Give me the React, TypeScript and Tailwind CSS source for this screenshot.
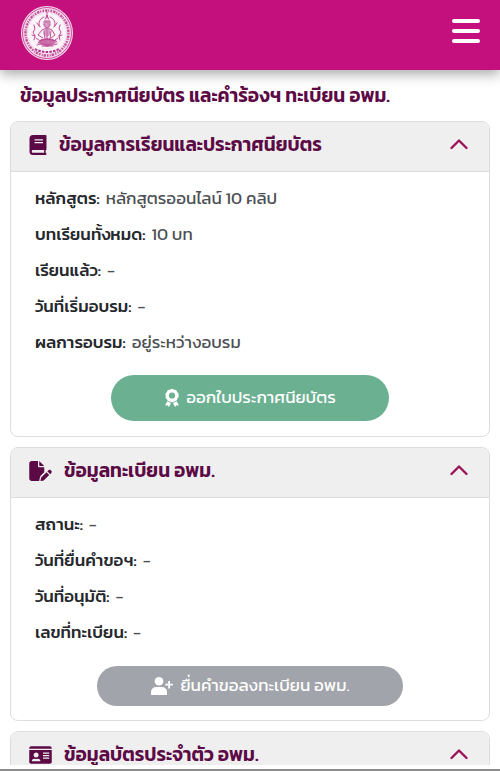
import { useState } from "react";
import type { ReactNode } from "react";
import { FaIdCard } from "react-icons/fa";
import { FaFilePen } from "react-icons/fa6";

type Row = { label: string; value: string };

const courseRows: Row[] = [
  { label: "หลักสูตร:", value: "หลักสูตรออนไลน์ 10 คลิป" },
  { label: "บทเรียนทั้งหมด:", value: "10 บท" },
  { label: "เรียนแล้ว:", value: "-" },
  { label: "วันที่เริ่มอบรม:", value: "-" },
  { label: "ผลการอบรม:", value: "อยู่ระหว่างอบรม" },
];

const registerRows: Row[] = [
  { label: "สถานะ:", value: "-" },
  { label: "วันที่ยื่นคำขอฯ:", value: "-" },
  { label: "วันที่อนุมัติ:", value: "-" },
  { label: "เลขที่ทะเบียน:", value: "-" },
];

const Seal = () => (
  <svg viewBox="0 0 54 56" className="h-[56px] w-[54px]" aria-hidden="true">
    <ellipse cx="27" cy="28" rx="26" ry="27" fill="#f3dbea" />
    <ellipse cx="27" cy="28" rx="24.5" ry="25.5" fill="none" stroke="#c4107f" strokeWidth="0.7" />
    {/* lettering band */}
    <ellipse cx="27" cy="28" rx="21.5" ry="22.5" fill="none" stroke="#c2509b" strokeWidth="2.4" strokeDasharray="1.5 1.1 2.4 0.9 1 1.3" />
    <ellipse cx="27" cy="28" rx="19" ry="20" fill="#fbf3f8" />
    {/* deity with crown and halo */}
    <g fill="none" stroke="#b83b8b" strokeWidth="0.9" strokeLinecap="round">
      <path d="M27 7v6M25.5 14l1.5-4 1.5 4M24 17h6M24.5 19c0 5 5 5 5 0" />
      <path d="M20 22c-3-5 1-9 4-10M34 22c3-5-1-9-4-10" />
      <path d="M22 25c3-2 7-2 10 0l3 5-4 3M22 25l-4 5 5 3M24 26l1 8h5l1-8M27 25v8" />
      <path d="M18 38c3-5 15-5 19-1M17 40c5-3 13 2 20-1M19 36l8-2 9 2M22 41h11" />
      <path d="M14 20l1 4-2 3 2 4-1 4M40 20l-1 4 2 3-2 4 1 4M12 30l3 1M42 30l-3 1" />
      <path d="M17 18l2 3M37 18l-2 3M16 33l3 2M38 33l-3 2" />
    </g>
    <path d="M21 34h12l3 4-9 4-9-4z" fill="#bd4c94" opacity="0.8" />
    <path d="M24 15h6l1 5-2 3 2 6-4 3-4-3 2-6-2-3z" fill="#c873ac" opacity="0.7" />
    <path d="M15 44c7 4 17 4 24 0" fill="none" stroke="#b53188" strokeWidth="2" strokeDasharray="2.5 1.2" />
  </svg>
);

const BookIcon = () => (
  <svg viewBox="0 0 18 20" className="mr-3 h-5 w-[18px]" aria-hidden="true">
    <path
      fill="currentColor"
      fillRule="evenodd"
      d="M4 0h12.500q1 0 1 1v13q0 .8-.7 1-.4 1.500 0 3 .7.200.7 1t-1 1H4q-3.500 0-3.500-3.500v-13Q.5 0 4 0zM4 15q-1.300 0-1.300 1.400T4 17.700h11.200q-.3-1.300 0-2.700zM5.500 4.300v1.300h8.500V4.300zM5.500 7v1.300h8.500V7z"
    />
  </svg>
);

const AwardIcon = () => (
  <svg viewBox="0 0 16 20" className="h-5 w-4" aria-hidden="true">
    <circle cx="8" cy="7.500" r="4.700" fill="none" stroke="currentColor" strokeWidth="3.200" />
    <circle cx="8" cy="7.500" r="6" fill="none" stroke="currentColor" strokeWidth="1.400" strokeDasharray="2.400 1.370" />
    <path fill="currentColor" d="M3.300 13.300 7 15l-2 4-1.600-1.800-2.400.3zM12.700 13.300 9 15l2 4 1.600-1.800 2.400.3z" />
  </svg>
);

const UserPlusIcon = () => (
  <svg viewBox="0 0 24 20" className="h-5 w-6" fill="currentColor" aria-hidden="true">
    <circle cx="9" cy="5.300" r="4.300" />
    <path d="M1 19v-2.500Q1 11 6.500 11h5q5.500 0 5.500 5.500V19z" />
    <path d="M18.200 5h1.800v2.800h2.800v1.800H20v2.800h-1.800V9.600h-2.800V7.800h2.800z" />
  </svg>
);

type SectionProps = {
  icon: ReactNode;
  title: string;
  children?: ReactNode;
};

const Section = ({ icon, title, children }: SectionProps) => {
  const [open, setOpen] = useState(true);

  return (
    <section className="shrink-0 overflow-hidden rounded-lg border border-[#dcdede] bg-white">
      <h2>
        <button
          type="button"
          aria-expanded={open}
          onClick={() => setOpen(!open)}
          className="flex h-[50px] w-full items-center border-b border-[#dcdede] bg-[#efefef] pr-5 pb-1 pl-[18px] text-left text-[#5c0a45]"
        >
          {icon}
          <span className="flex-1 text-[19px] leading-7 font-semibold">{title}</span>
          <svg
            viewBox="0 0 20 20"
            className={open ? "size-5" : "size-5 rotate-180"}
            fill="none"
            stroke="#9c1458"
            strokeWidth="2.4"
            strokeLinecap="round"
            strokeLinejoin="round"
            aria-hidden="true"
          >
            <path d="M2.500 13 10 5.500l7.500 7.500" />
          </svg>
        </button>
      </h2>
      {open && children}
    </section>
  );
};

const RowList = ({ rows }: { rows: Row[] }) => (
  <dl className="px-6 pt-2 text-[17px] leading-9">
    {rows.map((row) => (
      <div key={row.label} className="flex gap-[6px]">
        <dt className="font-medium text-[#25282c]">{row.label}</dt>
        <dd className="text-[#4c4f53]">{row.value}</dd>
      </div>
    ))}
  </dl>
);

const App = () => {
  return (
    <div className="flex h-screen flex-col overflow-hidden bg-white font-['Kanit','Prompt','Noto_Sans_Thai','Noto_Sans',sans-serif]">
      <header className="z-10 flex h-[70px] shrink-0 items-center justify-between bg-[#c4107c] pr-5 pb-1 pl-5 shadow-[0_4px_12px_rgba(0,0,0,0.35)]">
        <a href="#" aria-label="หน้าแรก">
          <Seal />
        </a>
        <button type="button" aria-label="เมนู" className="flex w-7 flex-col gap-[6px] pb-1">
          <span className="h-1 rounded-sm bg-white"></span>
          <span className="h-1 rounded-sm bg-white"></span>
          <span className="h-1 rounded-sm bg-white"></span>
        </button>
      </header>

      <main className="flex min-h-0 flex-1 flex-col gap-[10px] overflow-hidden px-[10px]">
        <h1 className="-mb-[10px] shrink-0 px-[10px] pt-3 pb-[11px] text-[19px] leading-7 font-semibold text-[#5c0a45]">
          ข้อมูลประกาศนียบัตร และคำร้องฯ ทะเบียน อพม.
        </h1>

        <Section icon={<BookIcon />} title="ข้อมูลการเรียนและประกาศนียบัตร">
          <RowList rows={courseRows} />
          <div className="flex justify-center py-[15px]">
            <button
              type="button"
              className="flex h-[46px] w-[58%] items-center justify-center gap-[6px] rounded-full bg-[#6ab091] text-[17px] text-white"
            >
              <AwardIcon />
              ออกใบประกาศนียบัตร
            </button>
          </div>
        </Section>

        <Section
          icon={<FaFilePen className="mr-3 h-5 w-[23px]" />}
          title="ข้อมูลทะเบียน อพม."
        >
          <RowList rows={registerRows} />
          <div className="flex justify-center pt-4 pb-[14px]">
            <button
              type="button"
              className="flex h-10 w-[64%] items-center justify-center gap-[6px] rounded-full bg-[#a1a5ab] text-[17px] text-white"
            >
              <UserPlusIcon />
              ยื่นคำขอลงทะเบียน อพม.
            </button>
          </div>
        </Section>

        <Section
          icon={<FaIdCard className="mr-3 h-5 w-[23px]" />}
          title="ข้อมูลบัตรประจำตัว อพม."
        />
      </main>
      <div className="h-[6px] shrink-0 border-b-2 border-[#8c8c8c] bg-white"></div>
    </div>
  );
};

export default App;
